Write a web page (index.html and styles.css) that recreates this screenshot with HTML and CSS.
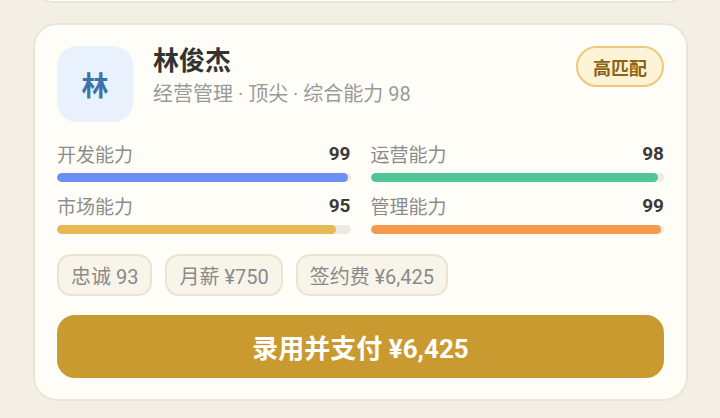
FILE: index.html
```html
<!DOCTYPE html>
<html lang="zh">
<head>
<meta charset="utf-8">
<link rel="stylesheet" href="styles.css">
</head>
<body>
<div class="page">
  <div class="card prev"></div>
  <div class="card">
    <div class="head">
      <div class="avatar">林</div>
      <div class="info">
        <div class="name">林俊杰</div>
        <div class="sub">经营管理 · 顶尖 · 综合能力 98</div>
      </div>
      <div class="badge">高匹配</div>
    </div>
    <div class="stats">
      <div class="stat">
        <div class="row"><span class="label">开发能力</span><span class="val">99</span></div>
        <div class="track"><div class="fill blue" style="width:99%"></div></div>
      </div>
      <div class="stat">
        <div class="row"><span class="label">运营能力</span><span class="val">98</span></div>
        <div class="track"><div class="fill green" style="width:98%"></div></div>
      </div>
      <div class="stat">
        <div class="row"><span class="label">市场能力</span><span class="val">95</span></div>
        <div class="track"><div class="fill yellow" style="width:95%"></div></div>
      </div>
      <div class="stat">
        <div class="row"><span class="label">管理能力</span><span class="val">99</span></div>
        <div class="track"><div class="fill orange" style="width:99%"></div></div>
      </div>
    </div>
    <div class="tags">
      <span class="tag">忠诚 93</span>
      <span class="tag">月薪 ¥750</span>
      <span class="tag">签约费 ¥6,425</span>
    </div>
    <button class="hire">录用并支付 ¥6,425</button>
  </div>
</div>
</body>
</html>
```
FILE: styles.css
```css
* { box-sizing: border-box; }
html, body { margin: 0; padding: 0; }
body {
  background: #f4efe5;
  font-family: Roboto, "Noto Sans CJK SC", sans-serif;
  width: 720px;
  height: 418px;
  overflow: hidden;
}
.page {
  padding: 0 32px 0 33px;
}
.card {
  background: #fffdf7;
  border: 2px solid #ece5d5;
  border-radius: 24px;
  padding: 21px 22px 21px 22px;
}
.card.prev {
  height: 40px;
  margin-top: -37px;
  margin-bottom: 20px;
  padding: 0;
}
.head {
  display: flex;
  align-items: flex-start;
}
.avatar {
  width: 76px;
  height: 76px;
  border-radius: 20px;
  background: #e8f1fc;
  color: #3c74a9;
  font-weight: 700;
  font-size: 27px;
  display: flex;
  align-items: center;
  justify-content: center;
  flex: none;
}
.info {
  margin-left: 20px;
  flex: 1;
}
.name {
  font-size: 26px;
  font-weight: 700;
  color: #333333;
  line-height: 30px;
}
.sub {
  margin-top: 5px;
  font-size: 20px;
  color: #9a9a9a;
  line-height: 26px;
}
.badge {
  height: 41px;
  padding: 0 15px;
  border: 2px solid #ecc978;
  background: #fdf3d6;
  border-radius: 21px;
  color: #8a6316;
  font-weight: 700;
  font-size: 18px;
  display: flex;
  align-items: center;
}
.stats {
  margin-top: 19px;
  display: grid;
  grid-template-columns: 1fr 1fr;
  column-gap: 20px;
  row-gap: 11px;
}
.row {
  display: flex;
  justify-content: space-between;
  align-items: center;
  height: 24px;
}
.label {
  font-size: 19px;
  color: #8c8c8c;
}
.val {
  font-size: 19px;
  font-weight: 700;
  color: #3a3a3a;
}
.track {
  margin-top: 8px;
  height: 9px;
  border-radius: 5px;
  background: #efeae1;
  overflow: hidden;
}
.fill { height: 100%; border-radius: 5px; }
.fill.blue { background: #6c8ff4; }
.fill.green { background: #50c597; }
.fill.yellow { background: #e6b957; }
.fill.orange { background: #f39a4f; }
.tags {
  margin-top: 20px;
  display: flex;
  gap: 13px;
}
.tag {
  height: 42px;
  padding: 0 12px;
  border: 2px solid #ebe3d2;
  background: #f8f4ea;
  border-radius: 14px;
  font-size: 20px;
  color: #8a8a8a;
  display: flex;
  align-items: center;
}
.hire {
  display: block;
  width: 100%;
  margin-top: 19px;
  height: 63px;
  border: none;
  border-radius: 18px;
  background: #c99a2f;
  color: #ffffff;
  font-family: Roboto, "Noto Sans CJK SC", sans-serif;
  font-weight: 700;
  font-size: 26px;
  padding: 0;
}
```
